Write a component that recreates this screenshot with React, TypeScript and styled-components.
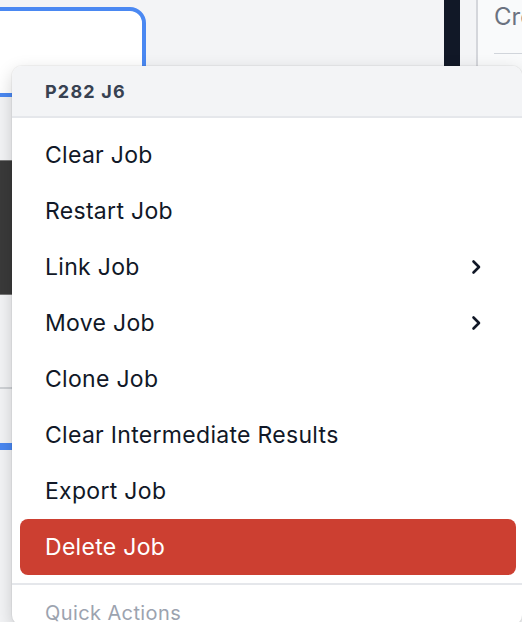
import styled, { createGlobalStyle } from 'styled-components'

const GlobalStyle = createGlobalStyle`
  html, body {
    margin: 0;
    padding: 0;
    background: #f3f4f6;
    font-family: Inter, "Noto Sans", "Liberation Sans", sans-serif;
  }
`;

const Page = styled.div`
  position: relative;
  width: 522px;
  height: 622px;
  overflow: hidden;
  display: flex;
  background: #f3f4f6;
`;

const Workspace = styled.div`
  flex: 0 0 444px;
  display: flex;
  flex-direction: column;
  padding-top: 7px;
  box-sizing: border-box;
`;

const NodeCard = styled.div`
  margin-left: -20px;
  width: 166px;
  height: 90px;
  box-sizing: border-box;
  border: 4px solid #4a88f2;
  border-radius: 16px;
  background: #fff;
`;

const Thumb = styled.div`
  margin-top: 63px;
  height: 133px;
  background: #3a3a3a;
  border-top: 1px solid #777;
  border-bottom: 1px solid #777;
`;

const Rule = styled.div`
  margin-top: 92px;
  height: 2px;
  background: #cfd2d6;
`;

const BlueBar = styled.div`
  margin-top: 54px;
  height: 7px;
  background: #4a88f2;
`;

const DarkRail = styled.div`
  flex: 0 0 16px;
  background: #111827;
`;

const Gutter = styled.div`
  flex: 0 0 16px;
  border-right: 2px solid #d4d6db;
`;

const SidePanel = styled.div`
  flex: 1;
  min-width: 0;
  overflow: hidden;
  background: #f9fafb;
  padding: 2px 0 0 16px;

  h2 {
    margin: 0;
    font-size: 24px;
    font-weight: 400;
    color: #6b7280;
    line-height: 30px;
    white-space: nowrap;
  }
  hr {
    border: none;
    height: 1px;
    background: #d1d5db;
    margin: 21px 0 0;
  }
`;

const Menu = styled.div`
  position: absolute;
  left: 12px;
  top: 66px;
  width: 510px;
  background: #fff;
  border-radius: 10px;
  box-shadow: 0 6px 18px rgba(0, 0, 0, 0.18), 0 0 0 1px rgba(0, 0, 0, 0.04);
  overflow: hidden;
`;

const MenuHeader = styled.div`
  height: 50px;
  display: flex;
  align-items: center;
  padding-left: 33px;
  background: #f3f4f6;
  border-bottom: 2px solid #e5e7eb;
  font-size: 18px;
  font-weight: 700;
  color: #374151;
  letter-spacing: 1.2px;
`;

const ItemList = styled.div`
  padding: 9px 6px 8px 8px;
  border-bottom: 2px solid #e5e7eb;
`;

const Item = styled.div<{ $danger?: boolean }>`
  height: 56px;
  display: flex;
  align-items: center;
  justify-content: space-between;
  padding: 0 28px 0 25px;
  border-radius: 8px;
  font-size: 23px;
  letter-spacing: 0.3px;
  color: ${p => (p.$danger ? '#fff' : '#111827')};
  background: ${p => (p.$danger ? '#cc3f31' : 'transparent')};
`;

const SectionLabel = styled.div`
  padding: 16px 0 0 33px;
  font-size: 20px;
  letter-spacing: 0.4px;
  color: #9ca3af;
`;

const Chevron = () => (
  <svg width="24" height="24" viewBox="0 0 24 24" fill="none" stroke="#111827" strokeWidth="2.6" strokeLinecap="round" strokeLinejoin="round">
    <path d="m9.5 6.5 5.5 5.5-5.5 5.5" />
  </svg>
);

const items: { label: string; sub?: boolean; danger?: boolean }[] = [
  { label: 'Clear Job' },
  { label: 'Restart Job' },
  { label: 'Link Job', sub: true },
  { label: 'Move Job', sub: true },
  { label: 'Clone Job' },
  { label: 'Clear Intermediate Results' },
  { label: 'Export Job' },
  { label: 'Delete Job', danger: true },
];

export default function App() {
  return (
    <>
      <GlobalStyle />
      <Page>
        <Workspace>
          <NodeCard />
          <Thumb />
          <Rule />
          <BlueBar />
        </Workspace>
        <DarkRail />
        <Gutter />
        <SidePanel>
          <h2>Create</h2>
          <hr />
        </SidePanel>

        <Menu>
          <MenuHeader>P282 J6</MenuHeader>
          <ItemList>
            {items.map(it => (
              <Item key={it.label} $danger={it.danger}>
                <span>{it.label}</span>
                {it.sub && <Chevron />}
              </Item>
            ))}
          </ItemList>
          <SectionLabel>Quick Actions</SectionLabel>
        </Menu>
      </Page>
    </>
  )
}
